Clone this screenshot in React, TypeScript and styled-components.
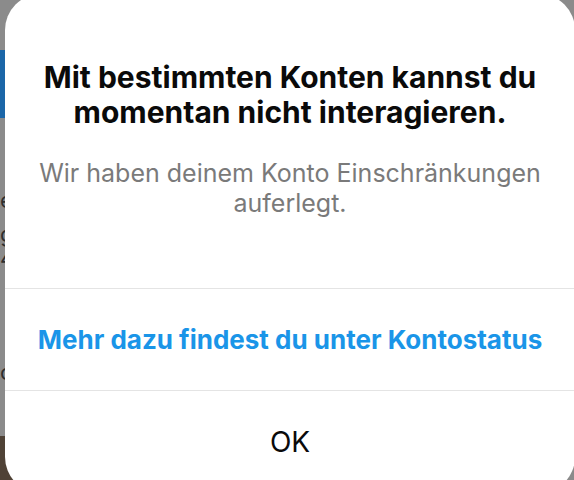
import React from 'react';
import styled, { createGlobalStyle } from 'styled-components';

const GlobalStyle = createGlobalStyle`
  html, body {
    margin: 0;
    padding: 0;
    background: #8b8b8b;
  }
  body {
    font-family: Inter, "Noto Sans", "Liberation Sans", sans-serif;
    -webkit-font-smoothing: antialiased;
  }
`;

const Screen = styled.div`
  position: relative;
  width: 574px;
  height: 480px;
  overflow: hidden;
  background: #8b8b8b;
`;

// dimmed app content behind the alert
const Backdrop = styled.div`
  display: flex;
  flex-direction: column;
  height: 100%;
`;

const FeedBanner = styled.div`
  margin-top: 50px;
  width: 40px;
  height: 68px;
  background: #1b66a8;
`;

const FeedText = styled.div<{ gap: number }>`
  margin-top: ${({ gap }) => gap}px;
  width: 10px;
  font-size: 22px;
  line-height: 24px;
  color: #2e2e2e;
  text-align: right;
`;

const FeedPhoto = styled.div`
  margin-top: auto;
  width: 40px;
  height: 44px;
  background: #4f4236;
`;

const Alert = styled.div`
  position: absolute;
  left: 5px;
  top: -6px;
  width: 570px;
  height: 499px;
  background: #ffffff;
  border-radius: 36px;
  display: flex;
  flex-direction: column;
  overflow: hidden;
`;

const Header = styled.div`
  height: 294px;
  padding: 66px 12px 0;
  box-sizing: border-box;
  text-align: center;
`;

const Title = styled.h1`
  margin: 0;
  font-size: 30px;
  line-height: 35px;
  font-weight: 700;
  color: #0a0a0a;
  letter-spacing: 0;
  white-space: nowrap;
`;

const Message = styled.p`
  margin: 28px 0 0;
  font-size: 25px;
  line-height: 30px;
  font-weight: 400;
  color: #7a7a7a;
  white-space: nowrap;
`;

const Action = styled.button<{ $primary?: boolean; $height: number }>`
  display: flex;
  align-items: center;
  justify-content: center;
  height: ${({ $height }) => $height}px;
  flex-shrink: 0;
  width: 100%;
  padding: 0;
  border: 0;
  border-top: 1px solid #e4e4e4;
  background: transparent;
  font-family: inherit;
  font-size: ${({ $primary }) => ($primary ? '26px' : '28px')};
  font-weight: ${({ $primary }) => ($primary ? 700 : 400)};
  color: ${({ $primary }) => ($primary ? '#1a95e8' : '#0a0a0a')};
  white-space: nowrap;
  cursor: pointer;
`;

export default function App() {
  return (
    <Screen>
      <GlobalStyle />
      <Backdrop>
        <FeedBanner />
        <FeedText gap={70}>e</FeedText>
        <FeedText gap={10}>g</FeedText>
        <FeedText gap={0}>4</FeedText>
        <FeedText gap={90}>o</FeedText>
        <FeedPhoto />
      </Backdrop>
      <Alert>
        <Header>
          <Title>
            Mit bestimmten Konten kannst du
            <br />
            momentan nicht interagieren.
          </Title>
          <Message>
            Wir haben deinem Konto Einschränkungen
            <br />
            auferlegt.
          </Message>
        </Header>
        <Action $primary $height={102}>
          Mehr dazu findest du unter Kontostatus
        </Action>
        <Action $height={103}>OK</Action>
      </Alert>
    </Screen>
  );
}
